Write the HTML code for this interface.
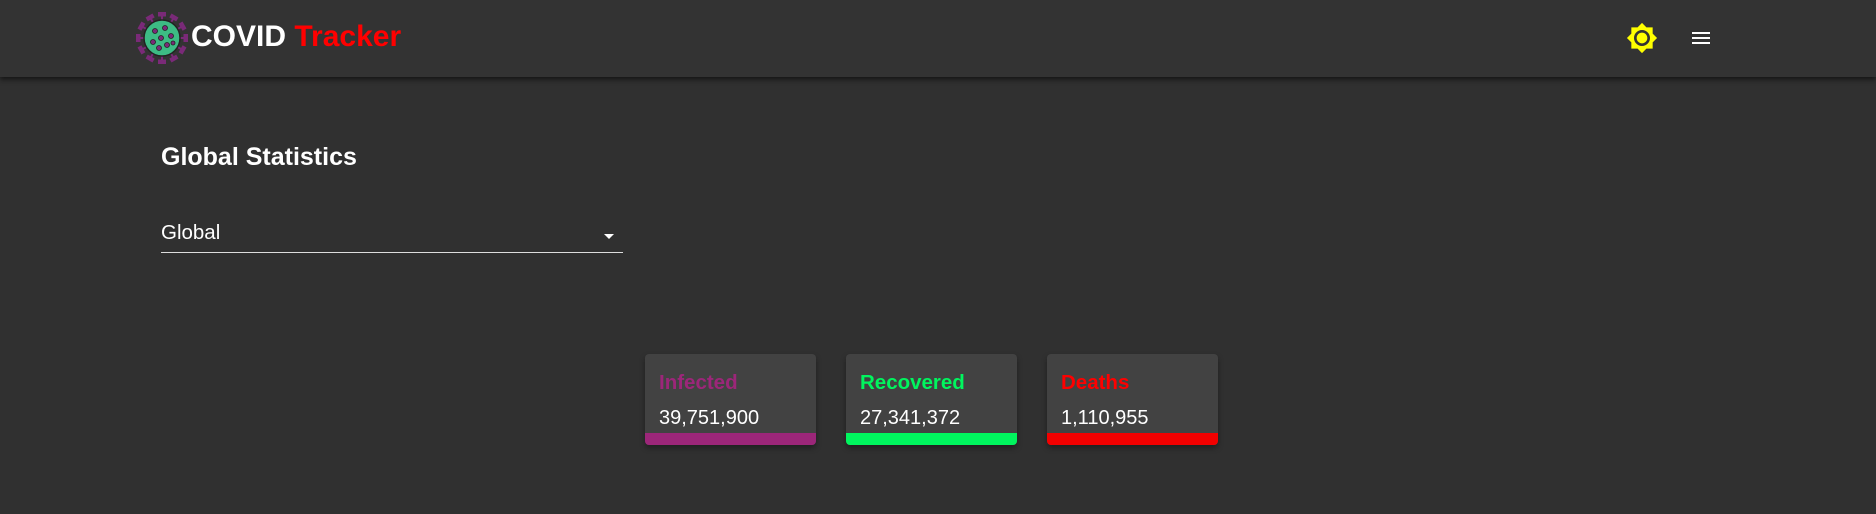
<!DOCTYPE html>
<html><head><style>
body{margin:0;width:1876px;height:514px;background:#303030;font-family:"Liberation Sans",Arial,sans-serif;overflow:hidden;position:relative}
.hdr{position:absolute;left:0;top:0;width:1876px;height:77px;background:#333;box-shadow:0 2px 4px rgba(0,0,0,.4),0 4px 5px rgba(0,0,0,.2)}
.logo{position:absolute;left:191px;top:19px;font-size:30px;font-weight:bold;color:#fff;line-height:36px}
.logo span{color:#f00}
.title{position:absolute;left:161px;top:143px;font-size:25px;font-weight:bold;color:#fff}
.sel{position:absolute;left:161px;top:220px;width:462px;height:32px;border-bottom:1px solid #ddd;color:#fff;font-size:20.5px}
.card{position:absolute;top:354px;width:171px;height:91px;background:#424242;border-radius:4px;overflow:hidden;box-shadow:0 3px 6px rgba(0,0,0,.35)}
.card .l{position:absolute;left:14px;top:17px;font-size:20.5px;font-weight:bold}
.card .n{position:absolute;left:14px;top:53px;font-size:20px;color:#fff}
.card .b{position:absolute;left:0;bottom:0;width:100%;height:12px}
</style></head><body>
<div class="hdr">
<svg style="position:absolute;left:135px;top:11px" width="54" height="54" viewBox="0 0 54 54">
<g stroke="#7a2a78" stroke-width="2" fill="#7a2a78">
<g id="s"><line x1="27" y1="27" x2="27" y2="4"/><rect x="24" y="2" width="6" height="2.5"/></g>
<use href="#s" transform="rotate(30 27 27)"/><use href="#s" transform="rotate(60 27 27)"/><use href="#s" transform="rotate(90 27 27)"/><use href="#s" transform="rotate(120 27 27)"/><use href="#s" transform="rotate(150 27 27)"/><use href="#s" transform="rotate(180 27 27)"/><use href="#s" transform="rotate(210 27 27)"/><use href="#s" transform="rotate(240 27 27)"/><use href="#s" transform="rotate(270 27 27)"/><use href="#s" transform="rotate(300 27 27)"/><use href="#s" transform="rotate(330 27 27)"/>
</g>
<circle cx="27" cy="27" r="18" fill="#3dbb84" stroke="#222" stroke-width="1.5"/>
<g fill="#7a2a78" stroke="#222" stroke-width=".8"><circle cx="20" cy="20" r="2.5"/><circle cx="30" cy="17" r="2.5"/><circle cx="36" cy="25" r="2.5"/><circle cx="26" cy="27" r="2.5"/><circle cx="18" cy="31" r="2.5"/><circle cx="32" cy="34" r="2.5"/><circle cx="24" cy="37" r="2.5"/><circle cx="38" cy="32" r="2"/></g>
</svg>
<div class="logo">COVID <span>Tracker</span></div>
<svg style="position:absolute;left:1626px;top:22px" width="32" height="32" viewBox="0 0 24 24"><path fill="#ffff00" d="M20 8.69V4h-4.69L12 .69 8.69 4H4v4.69L.69 12 4 15.31V20h4.69L12 23.31 15.31 20H20v-4.690L23.31 12 20 8.69zM12 18c-3.31 0-6-2.69-6-6s2.69-6 6-6 6 2.69 6 6-2.69 6-6 6zm0-10c-2.21 0-4 1.79-4 4s1.79 4 4 4 4-1.79 4-4-1.79-4-4-4z"/></svg>
<svg style="position:absolute;left:1689px;top:26px" width="24" height="24" viewBox="0 0 24 24"><path fill="#fff" d="M3 18h18v-2H3v2zm0-5h18v-2H3v2zm0-7v2h18V6H3z"/></svg>
</div>
<div class="title">Global Statistics</div>
<div class="sel"><div style="position:absolute;left:0;top:1px">Global</div>
<svg style="position:absolute;left:436px;top:4px" width="24" height="24" viewBox="0 0 24 24"><path fill="#fff" d="M7 10l5 5 5-5z"/></svg></div>
<div class="card" style="left:645px"><div class="l" style="color:#9c2679">Infected</div><div class="n">39,751,900</div><div class="b" style="background:#9c2679"></div></div>
<div class="card" style="left:846px"><div class="l" style="color:#00f55e">Recovered</div><div class="n">27,341,372</div><div class="b" style="background:#00f55e"></div></div>
<div class="card" style="left:1047px"><div class="l" style="color:#f00">Deaths</div><div class="n">1,110,955</div><div class="b" style="background:#f20000"></div></div>
</body></html>
